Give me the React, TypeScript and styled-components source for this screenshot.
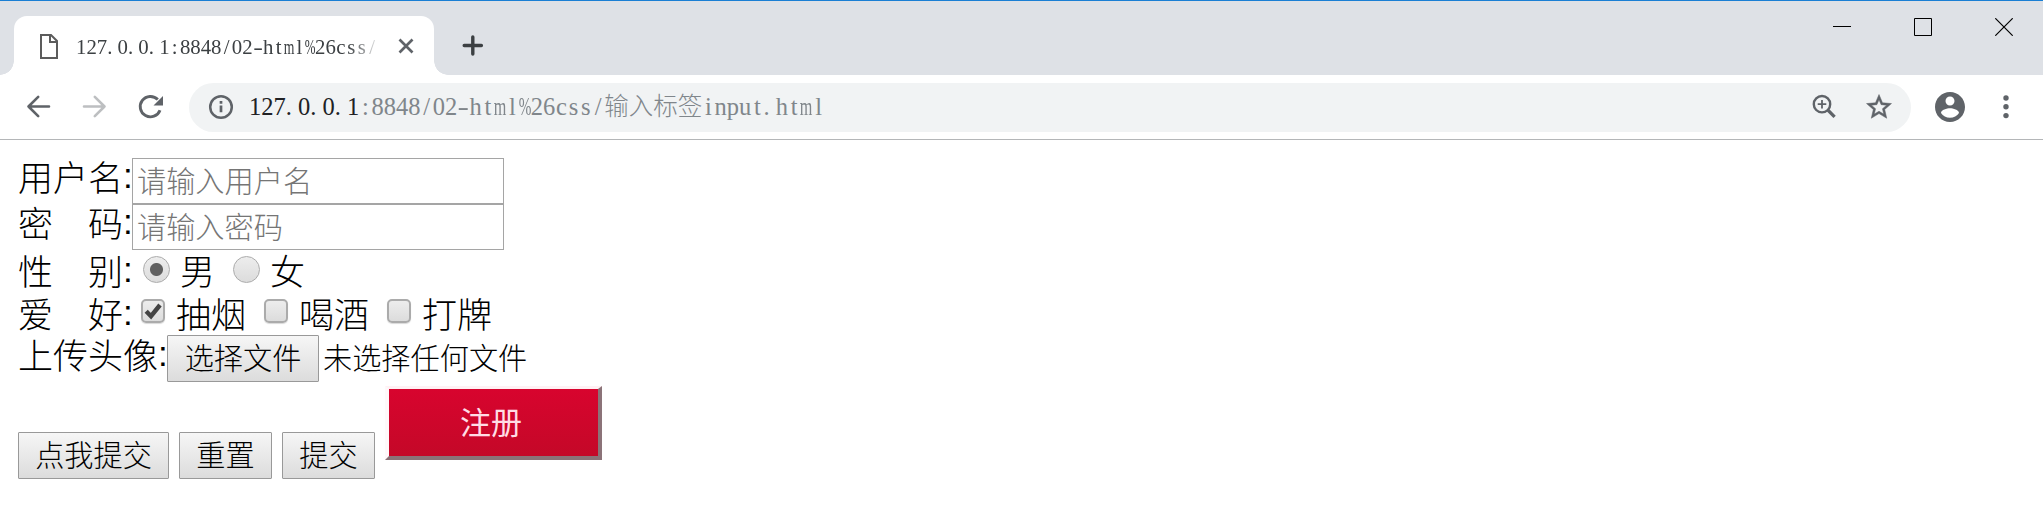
import React from "react";
import styled, { createGlobalStyle } from "styled-components";

const GlobalStyle = createGlobalStyle`
  * { box-sizing: border-box; }
  body {
    margin: 0;
    background: #fff;
    color: #000;
    font-family: "Noto Sans CJK SC", sans-serif;
    font-weight: 300;
    overflow: hidden;
  }
  svg { display: block; flex: none; }
`;

const Window = styled.div`
  width: 2043px;
  height: 526px;
  background: #fff;
  overflow: hidden;
`;

const TabStrip = styled.header`
  display: flex;
  align-items: flex-start;
  height: 75px;
  background: #dee1e6;
  border-top: 1px solid #1a7fd4;
`;

const TabFoot = styled.div<{ $side: "left" | "right" }>`
  width: 14px;
  height: 14px;
  margin-top: 60px;
  background: radial-gradient(
    circle at ${(p) => (p.$side === "left" ? "0 0" : "100% 0")},
    #dee1e6 13.5px,
    #fff 14px
  );
`;

const Tab = styled.div`
  display: flex;
  align-items: center;
  width: 420px;
  height: 59px;
  margin-top: 15px;
  padding-left: 24px;
  border-radius: 13px 13px 0 0;
  background: #fff;
`;

const TabTitle = styled.div`
  width: 307px;
  margin-left: 16px;
  overflow: hidden;
  white-space: nowrap;
  font-size: 20.8px;
  line-height: 32px;
  color: #3c4043;
  mask-image: linear-gradient(to right, #000 272px, transparent 306px);
`;

const TabClose = styled.div`
  margin-left: 14px;
`;

const NewTab = styled.div`
  margin: 33px 0 0 14px;
`;

const WindowControls = styled.div`
  display: flex;
  gap: 62px;
  margin: 17px 30px 0 auto;
`;

const Toolbar = styled.div`
  display: flex;
  align-items: center;
  height: 65px;
  padding-left: 10px;
  border-bottom: 1px solid #b4b6b8;
`;

const ToolButton = styled.div<{ $width: number }>`
  display: flex;
  justify-content: center;
  width: ${(p) => p.$width}px;
`;

const Omnibox = styled.div`
  display: flex;
  align-items: center;
  width: 1722px;
  height: 49px;
  margin-left: 11px;
  padding: 0 17px 0 19px;
  border-radius: 25px;
  background: #f1f3f4;
`;

const Url = styled.div`
  flex: 1;
  margin-left: 15px;
  padding-bottom: 2px;
  white-space: nowrap;
  font-size: 24.5px;
  line-height: 36px;
  color: #80868b;
`;

const Host = styled.span`
  color: #202124;
`;

const OmniboxIcons = styled.div`
  display: flex;
  align-items: center;
  gap: 26px;
`;

const Cell = styled.span<{ $scale: number; $left: boolean }>`
  display: inline-flex;
  justify-content: ${(p) => (p.$left ? "flex-start" : "center")};
  width: 0.5em;
  font-family: "Liberation Serif", serif;
  font-weight: 400;
  transform: scaleX(${(p) => p.$scale});
`;

const wideGlyphs: Record<string, number> = { m: 0.66, "%": 0.62 };

function FixedPitch({ text }: { text: string }) {
  return (
    <>
      {Array.from(text).map((ch, i) => (
        <Cell key={i} $scale={wideGlyphs[ch] ?? (ch === "-" ? 1.4 : 1)} $left={ch === "."}>
          {ch}
        </Cell>
      ))}
    </>
  );
}

const Form = styled.form`
  display: flex;
  flex-direction: column;
  padding: 18px 0 0 18px;
`;

const Row = styled.div<{ $height: number; $line: number }>`
  display: flex;
  align-items: flex-start;
  height: ${(p) => p.$height}px;
  font-size: 35px;
  line-height: ${(p) => p.$line}px;
  white-space: nowrap;
`;

const Label = styled.label<{ $wide?: boolean }>`
  display: flex;
  width: ${(p) => (p.$wide ? 149 : 114)}px;
`;

const LabelText = styled.span`
  display: flex;
  flex: 1;
  justify-content: space-between;
`;

const Colon = styled.span`
  width: 9px;
  text-align: center;
  font-family: "Liberation Sans", sans-serif;
  font-weight: 400;
`;

const TextInput = styled.input`
  width: 372px;
  height: 46px;
  padding: 0 4px 5px;
  border: 1px solid #a5a5a5;
  border-radius: 0;
  outline: none;
  background: #fff;
  font: 300 29.2px "Noto Sans CJK SC", sans-serif;
  &::placeholder {
    color: #757575;
    opacity: 1;
  }
`;

const Radio = styled.input`
  appearance: none;
  flex: none;
  width: 27px;
  height: 27px;
  margin: 5px 10px 0 11px;
  border: 1.5px solid #ababab;
  border-radius: 50%;
  background: linear-gradient(#ededed, #dcdcdc);
  &:checked {
    background:
      radial-gradient(circle, #606060 6px, transparent 7px),
      linear-gradient(#ededed, #dcdcdc);
  }
`;

const CheckBox = styled.span`
  flex: none;
  width: 24px;
  height: 24px;
  margin: 6px 11px 0 9px;
  border: 2px solid #ababab;
  border-radius: 5px;
  background: linear-gradient(#ededed, #dcdcdc);
  box-shadow: 0 1px 1px #d9d9d9;
`;

const Option = styled.span<{ $width: number }>`
  width: ${(p) => p.$width}px;
`;

const Button = styled.button<{ $width: number }>`
  width: ${(p) => p.$width}px;
  height: 47px;
  padding: 0 0 4px;
  border: 1px solid #999;
  border-radius: 1px;
  background: linear-gradient(#f6f6f6, #dcdcdc);
  color: #000;
  font: 300 29.2px/41px "Noto Sans CJK SC", sans-serif;
`;

const FileName = styled.span`
  margin-left: 4px;
  font-size: 29.2px;
  line-height: 42px;
`;

const Actions = styled.div`
  display: flex;
  align-items: flex-start;
  gap: 10px;
  margin-top: 4px;
  ${Button} {
    margin-top: 46px;
  }
`;

const RegisterButton = styled.button`
  width: 217px;
  height: 74px;
  padding: 0 5px 3px 0;
  border-style: solid;
  border-width: 3px 4px 4px 4px;
  border-color: #fff1f4 #8b7378 #8b7378 #fff8fa;
  background: linear-gradient(#d8042e, #c40828);
  color: #ffdce5;
  font: 400 31px/62px "Noto Sans CJK SC", sans-serif;
`;

const grey = "#5f6368";

function FieldLabel({ chars, wide }: { chars: string[]; wide?: boolean }) {
  return (
    <Label $wide={wide}>
      <LabelText>
        {chars.map((c) => (
          <span key={c}>{c}</span>
        ))}
      </LabelText>
      <Colon>:</Colon>
    </Label>
  );
}

export default function App() {
  return (
    <Window>
      <GlobalStyle />
      <TabStrip>
        <TabFoot $side="left" />
        <Tab>
          <svg width="22" height="30" viewBox="0 0 22 30" fill="none" stroke="#5c5c5c" strokeWidth="2">
            <path d="M3 4h10l6 6v17H3z" />
            <path d="M12 4v7h7" />
          </svg>
          <TabTitle>
            <FixedPitch text="127.0.0.1:8848/02-html%26css/" />
          </TabTitle>
          <TabClose>
            <svg width="18" height="18" viewBox="0 0 18 18" stroke={grey} strokeWidth="2.7">
              <path d="M2.5 2.5l13 13M15.5 2.5l-13 13" />
            </svg>
          </TabClose>
        </Tab>
        <TabFoot $side="right" />
        <NewTab>
          <svg width="22" height="22" viewBox="0 0 22 22" stroke="#3c4043" strokeWidth="3.4" strokeLinecap="round">
            <path d="M2.2 11.5h17.2M10.8 2.9v17.2" />
          </svg>
        </NewTab>
        <WindowControls>
          <svg width="19" height="18" viewBox="0 0 19 18" stroke="#000">
            <path d="M0 8.5h18" />
          </svg>
          <svg width="19" height="18" viewBox="0 0 19 18" fill="none" stroke="#000">
            <path d="M.5 .5h17v17H.5z" />
          </svg>
          <svg width="18" height="18" viewBox="0 0 18 18" stroke="#000" strokeWidth="1.2">
            <path d="M.3 .3l17.4 17.4M17.7 .3L.3 17.7" />
          </svg>
        </WindowControls>
      </TabStrip>

      <Toolbar>
        <ToolButton $width={56}>
          <svg width="26" height="26" viewBox="0 0 26 26" fill="none" stroke={grey} strokeWidth="2.6" strokeLinecap="round" strokeLinejoin="round">
            <path d="M24 12.5H3.5M13.2 2.8L3.5 12.5l9.7 9.7" />
          </svg>
        </ToolButton>
        <ToolButton $width={56}>
          <svg width="26" height="26" viewBox="0 0 26 26" fill="none" stroke="#bdbfc1" strokeWidth="2.6" strokeLinecap="round" strokeLinejoin="round">
            <path d="M3 12.5h20.5M13.8 2.8l9.7 9.7-9.7 9.7" />
          </svg>
        </ToolButton>
        <ToolButton $width={56}>
          <svg width="26" height="26" viewBox="0 0 26 26" fill="none" stroke={grey} strokeWidth="2.9">
            <path d="M20.8 5.6A10.2 10.2 0 1 0 23 16.2" />
            <path d="M26 2v9.5h-9.5z" fill={grey} stroke="none" />
          </svg>
        </ToolButton>
        <Omnibox>
          <svg width="26" height="26" viewBox="0 0 26 26" fill="none" stroke={grey} strokeWidth="2.5">
            <circle cx="13" cy="13" r="10.8" />
            <path d="M13 11.5v6.7M13 7v2.7" strokeWidth="2.7" />
          </svg>
          <Url>
            <Host>
              <FixedPitch text="127.0.0.1" />
            </Host>
            <FixedPitch text=":8848/02-html%26css/" />
            输入标签
            <FixedPitch text="input.html" />
          </Url>
          <OmniboxIcons>
            <svg width="28" height="28" viewBox="0 0 28 28" fill="none" stroke={grey} strokeWidth="2.4">
              <circle cx="12" cy="11.2" r="8.2" />
              <path d="M7.7 11.2h8.6M12 6.9v8.6" strokeWidth="1.8" />
              <path d="M17.8 17l6.8 6.8" strokeWidth="3.2" />
            </svg>
            <svg width="30" height="30" viewBox="0 0 24 24" fill={grey}>
              <path d="M22 9.24l-7.19-.62L12 2 9.19 8.63 2 9.24l5.46 4.73L5.82 21 12 17.27 18.18 21l-1.63-7.03L22 9.24zM12 15.4l-3.76 2.27 1-4.28-3.32-2.88 4.38-.38L12 6.1l1.71 4.04 4.38.38-3.32 2.88 1 4.28L12 15.4z" stroke={grey} strokeWidth="0.4" />
            </svg>
          </OmniboxIcons>
        </Omnibox>
        <ToolButton $width={77}>
          <svg width="36" height="36" viewBox="0 0 24 24" fill={grey}>
            <path d="M12 2C6.48 2 2 6.48 2 12s4.48 10 10 10 10-4.48 10-10S17.52 2 12 2zm0 3c1.66 0 3 1.34 3 3s-1.34 3-3 3-3-1.34-3-3 1.34-3 3-3zm0 14.2c-2.5 0-4.71-1.28-6-3.22.03-1.99 4-3.08 6-3.08 1.99 0 5.97 1.09 6 3.08-1.29 1.94-3.5 3.22-6 3.22z" />
          </svg>
        </ToolButton>
        <ToolButton $width={35}>
          <svg width="8" height="26" viewBox="0 0 8 26" fill={grey}>
            <circle cx="4" cy="4" r="2.7" />
            <circle cx="4" cy="12.8" r="2.7" />
            <circle cx="4" cy="21.6" r="2.7" />
          </svg>
        </ToolButton>
      </Toolbar>

      <Form onSubmit={(e) => e.preventDefault()}>
        <Row $height={46} $line={35}>
          <FieldLabel chars={["用", "户", "名"]} />
          <TextInput placeholder="请输入用户名" />
        </Row>
        <Row $height={47} $line={35}>
          <FieldLabel chars={["密", "码"]} />
          <TextInput placeholder="请输入密码" />
        </Row>
        <Row $height={42} $line={37}>
          <FieldLabel chars={["性", "别"]} />
          <Radio type="radio" name="sex" defaultChecked />
          <Option $width={42}>男</Option>
          <Radio type="radio" name="sex" />
          <Option $width={42}>女</Option>
        </Row>
        <Row $height={42} $line={39}>
          <FieldLabel chars={["爱", "好"]} />
          <CheckBox>
            <svg width="20" height="20" viewBox="0 0 20 20" fill="none" stroke="#444" strokeWidth="4.4">
              <path d="M3.2 10.2l4.8 5L17 4" />
            </svg>
          </CheckBox>
          <Option $width={79}>抽烟</Option>
          <CheckBox />
          <Option $width={79}>喝酒</Option>
          <CheckBox />
          <Option $width={79}>打牌</Option>
        </Row>
        <Row $height={47} $line={38}>
          <FieldLabel chars={["上", "传", "头", "像"]} wide />
          <Button type="button" $width={152}>选择文件</Button>
          <FileName>未选择任何文件</FileName>
        </Row>
        <Actions>
          <Button type="submit" $width={151}>点我提交</Button>
          <Button type="reset" $width={93}>重置</Button>
          <Button type="button" $width={93}>提交</Button>
          <RegisterButton type="button">注册</RegisterButton>
        </Actions>
      </Form>
    </Window>
  );
}
